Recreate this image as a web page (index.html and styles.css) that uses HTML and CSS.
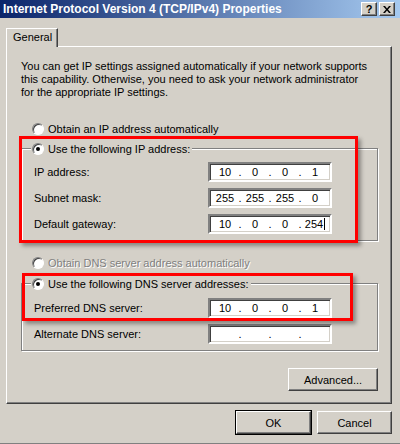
FILE: index.html
```html
<!DOCTYPE html>
<html lang="en">
<head>
    <meta charset="UTF-8">
    <meta name="viewport" content="width=device-width, initial-scale=1.0">
    <title>Internet Protocol Version 4 (TCP/IPv4) Properties</title>
    <link rel="stylesheet" href="styles.css">
</head>
<body>
    <div class="window">
        <div class="titlebar">
            <span class="title">Internet Protocol Version 4 (TCP/IPv4) Properties</span>
            <div class="caption-btns">
                <span class="cbtn">?</span>
                <span class="cbtn close">
                    <svg width="8" height="7" viewBox="0 0 8 7"><path d="M0 0h2l2 2.5 2-2.5h2l-3 3.5 3 3.5h-2l-2-2.5-2 2.5h-2l3-3.5z" fill="#000"/></svg>
                </span>
            </div>
        </div>

        <div class="client">
            <div class="tabs">
                <div class="tab">General</div>
            </div>

            <div class="panel">
                <p class="intro">You can get IP settings assigned automatically if your network supports<br>this capability. Otherwise, you need to ask your network administrator<br>for the appropriate IP settings.</p>

                <div class="radio first"><span class="dot"></span>Obtain an IP address automatically</div>

                <div class="group">
                    <div class="legend"><span class="dot checked"></span>Use the following IP address:</div>
                    <div class="row">
                        <span>IP address:</span>
                        <div class="ip"><span>10</span>.<span>0</span>.<span>0</span>.<span>1</span></div>
                    </div>
                    <div class="row">
                        <span>Subnet mask:</span>
                        <div class="ip"><span>255</span>.<span>255</span>.<span>255</span>.<span>0</span></div>
                    </div>
                    <div class="row">
                        <span>Default gateway:</span>
                        <div class="ip"><span>10</span>.<span>0</span>.<span>0</span>.<span><i class="caret">254</i></span></div>
                    </div>
                </div>

                <div class="radio disabled"><span class="dot"></span>Obtain DNS server address automatically</div>

                <div class="group dns">
                    <div class="legend"><span class="dot checked"></span>Use the following DNS server addresses:</div>
                    <div class="row">
                        <span>Preferred DNS server:</span>
                        <div class="ip"><span>10</span>.<span>0</span>.<span>0</span>.<span>1</span></div>
                    </div>
                    <div class="row">
                        <span>Alternate DNS server:</span>
                        <div class="ip"><span></span>.<span></span>.<span></span>.<span></span></div>
                    </div>
                </div>

                <div class="adv-row">
                    <button class="btn adv">Advanced...</button>
                </div>
            </div>

            <div class="footer">
                <button class="btn default">OK</button>
                <button class="btn">Cancel</button>
            </div>
        </div>

        <!-- red highlight marks drawn over the dialog -->
        <div class="mark mark-ip"></div>
        <div class="mark mark-dns"></div>
    </div>
</body>
</html>
```

FILE: styles.css
```css
body {
    margin: 0;
    background: #d4d0c8;
    font-family: "Liberation Sans", Arial, sans-serif;
    font-size: 11px;
    color: #000;
}
.window {
    position: relative;
    width: 400px;
    height: 444px;
    box-sizing: border-box;
    border-bottom: 1px solid #808080;
    overflow: hidden;
}
.titlebar {
    height: 18px;
    display: flex;
    align-items: center;
    justify-content: space-between;
    padding: 0 5px 0 3px;
    background: linear-gradient(to right, #0a246a, #a6caf0);
}
.title {
    color: #fff;
    font-weight: bold;
    font-size: 12px;
}
.caption-btns {
    display: flex;
    gap: 2px;
}
.cbtn {
    width: 12px;
    height: 10px;
    display: flex;
    align-items: center;
    justify-content: center;
    background: #d4d0c8;
    border: 1px solid;
    border-color: #fff #404040 #404040 #fff;
    box-shadow: inset -1px -1px 0 #808080;
    padding: 1px;
    font-weight: bold;
    font-size: 11px;
    line-height: 10px;
}
.client {
    padding: 10px 8px 0 6px;
}
.tabs {
    display: flex;
}
.tab {
    position: relative;
    z-index: 1;
    width: 44px;
    height: 18px;
    padding: 0 0 0 6px;
    margin-bottom: -1px;
    background: #d4d0c8;
    border: 1px solid;
    border-color: #fff #404040 transparent #fff;
    border-bottom: 0;
    box-shadow: inset -1px 0 0 #808080;
    line-height: 17px;
}
.panel {
    border: 1px solid;
    border-color: #fff #404040 #404040 #fff;
    box-shadow: inset -1px -1px 0 #808080;
    padding: 13px 13px 12px 14px;
}
.intro {
    margin: 0;
    line-height: 13px;
}
.radio {
    display: flex;
    align-items: center;
    height: 15px;
    padding-left: 11px;
}
.radio.first {
    margin-top: 22px;
}
.radio.disabled {
    margin-top: 14px;
    color: #808080;
    text-shadow: 1px 1px 0 #fff;
}
.dot {
    position: relative;
    width: 10px;
    height: 10px;
    margin-right: 4px;
    border-radius: 50%;
    background: #fff;
    border: 1px solid;
    border-color: #808080 #fff #fff #808080;
    box-shadow: inset 1px 1px 0 #404040;
}
.dot.checked::after {
    content: "";
    position: absolute;
    left: 3px;
    top: 3px;
    width: 4px;
    height: 4px;
    border-radius: 50%;
    background: #000;
}
.group {
    margin-top: 12px;
    border: 1px solid #808080;
    box-shadow: 1px 1px 0 #fff, inset 1px 1px 0 #fff;
    padding: 0 0 6px 12px;
}
.group.dns {
    margin-top: 13px;
}
.legend {
    display: flex;
    align-items: center;
    width: max-content;
    height: 15px;
    margin: -8px 0 6px -3px;
    padding: 0 2px 0 1px;
    background: #d4d0c8;
}
.dns .legend {
    margin-bottom: 7px;
}
.row {
    display: grid;
    grid-template-columns: 174px 124px;
    align-items: center;
    height: 20px;
    margin-bottom: 6px;
}
.row:last-child {
    margin-bottom: 0;
}
.ip {
    display: grid;
    grid-template-columns: 24px 6px 24px 6px 24px 6px 24px;
    align-items: center;
    height: 16px;
    padding: 0 0 0 3px;
    background: #fff;
    border: 2px solid;
    border-color: #808080 #fff #fff #808080;
    box-shadow: inset 1px 1px 0 #404040, inset -1px -1px 0 #d4d0c8;
    text-align: center;
}
.caret {
    font-style: normal;
    border-right: 1px solid #000;
    padding-right: 1px;
}
.adv-row {
    display: flex;
    justify-content: flex-end;
    margin-top: 17px;
}
.btn {
    height: 23px;
    width: 75px;
    padding: 0;
    font-family: inherit;
    font-size: 11px;
    color: #000;
    background: #d4d0c8;
    border: 1px solid;
    border-color: #fff #404040 #404040 #fff;
    box-shadow: inset -1px -1px 0 #808080;
}
.btn.adv {
    width: 90px;
}
.btn.default {
    outline: 1px solid #000;
    outline-offset: 0;
}
.footer {
    display: flex;
    justify-content: flex-end;
    gap: 6px;
    margin-top: 7px;
}
.mark {
    position: absolute;
    border: 3px solid #ff0000;
    box-shadow: 3px 3px 4px rgba(0, 0, 0, 0.35);
}
.mark-ip {
    left: 19px;
    top: 136px;
    width: 333px;
    height: 101px;
}
.mark-dns {
    left: 22px;
    top: 273px;
    width: 325px;
    height: 42px;
}
```
